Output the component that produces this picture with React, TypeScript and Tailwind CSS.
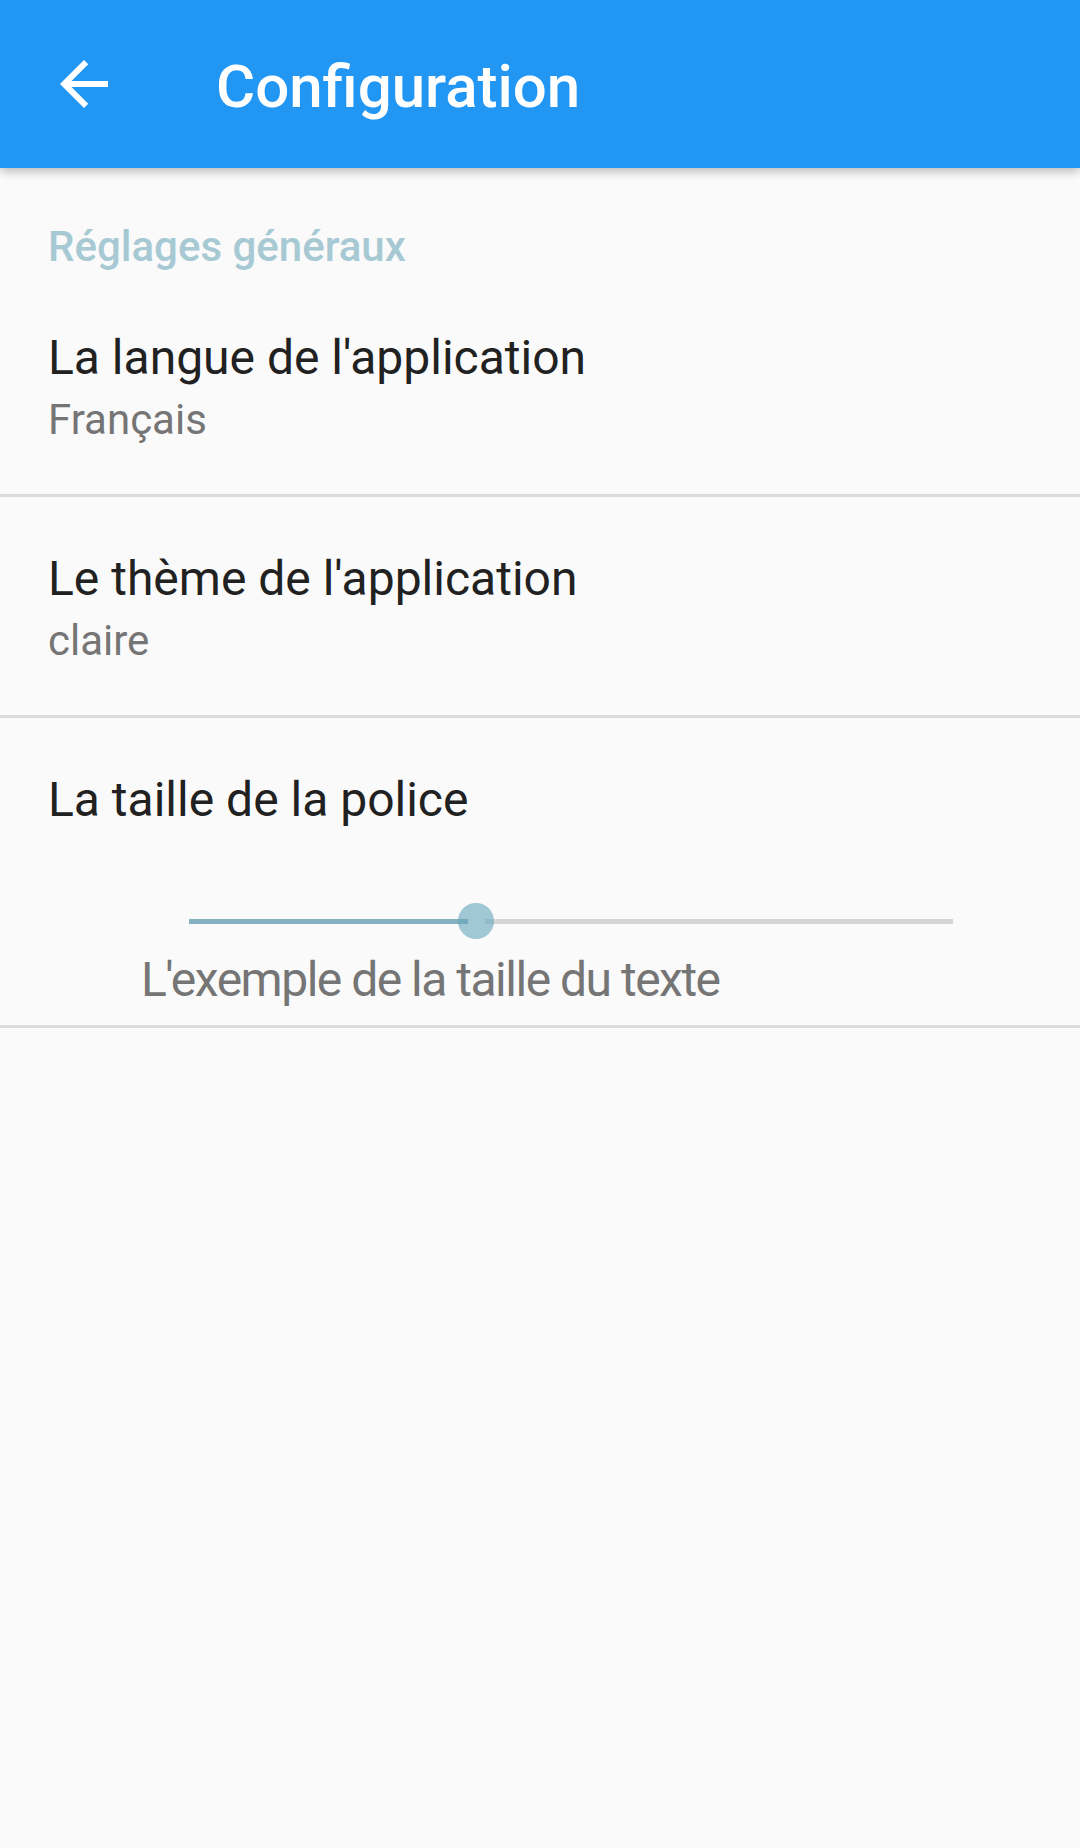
import { useState } from "react";

function ArrowBack() {
  return (
    <svg width={72} height={72} viewBox="0 0 24 24" fill="#ffffff" aria-hidden="true">
      <path d="M20 11H7.83l5.59-5.59L12 4l-8 8 8 8 1.41-1.41L7.83 13H20v-2z" />
    </svg>
  );
}

function PrefItem({ title, summary }: { title: string; summary: string }) {
  return (
    <div className="px-[48px] pt-[58px] pb-[53px]">
      <p className="text-[48px] leading-[48px] text-[#212121]">{title}</p>
      <p className="mt-[17px] text-[42px] leading-[42px] text-[#757575]">{summary}</p>
    </div>
  );
}

function Divider() {
  return <div className="h-[3px] bg-[#dcdcdc]" />;
}

function FontSizeSlider() {
  // track spans 189..953, thumb at 476
  const [pos] = useState(287);
  return (
    <div className="ml-[189px] w-[764px] relative h-[36px] flex items-center">
      <div className="flex w-full items-center">
        <div className="h-[5px] bg-[#84b1bf]" style={{ width: pos - 8 }} />
        <div className="h-[5px]" style={{ width: 17 }} />
        <div className="h-[5px] flex-1 bg-[#d6d6d6]" />
      </div>
      <div
        className="absolute top-0 h-[36px] w-[36px] rounded-full bg-[#62a6ba]/60"
        style={{ left: pos - 18 }}
      />
    </div>
  );
}

export default function App() {
  return (
    <div className="min-h-screen bg-[#fafafa] font-['Roboto','Noto_Sans',sans-serif]">
      <header className="relative z-10 flex h-[168px] items-center bg-[#2196f3] shadow-[0_3px_10px_rgba(0,0,0,0.28)]">
        <div className="ml-[48px] flex h-[72px] w-[72px] items-center justify-center">
          <ArrowBack />
        </div>
        <h1 className="ml-[96px] pt-[5px] text-[60px] leading-[60px] font-medium text-white">Configuration</h1>
      </header>

      <main>
        <p className="mt-[58px] mb-[8px] px-[48px] text-[42px] leading-[42px] font-medium text-[#a6c9d3]">
          Réglages généraux
        </p>
        <PrefItem title="La langue de l'application" summary="Français" />
        <Divider />
        <PrefItem title="Le thème de l'application" summary="claire" />
        <Divider />
        <div className="pt-[58px] pb-[21px]">
          <p className="px-[48px] text-[48px] leading-[48px] text-[#212121]">La taille de la police</p>
          <div className="mt-[79px]">
            <FontSizeSlider />
          </div>
          <p className="mt-[17px] pl-[141px] text-[48px] leading-[48px] tracking-[-1.5px] text-[#757575]">
            L'exemple de la taille du texte
          </p>
        </div>
        <Divider />
      </main>
    </div>
  );
}
